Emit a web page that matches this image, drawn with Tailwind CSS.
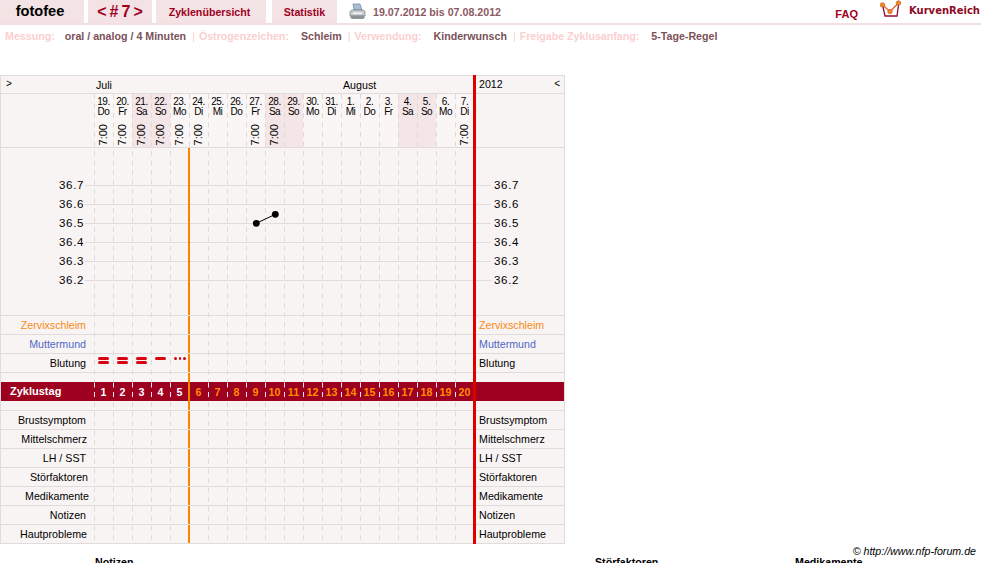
<!DOCTYPE html>
<html lang="de">
<head>
<meta charset="utf-8">
<title>Zyklusblatt</title>
<script src="https://cdn.jsdelivr.net/npm/@tailwindcss/browser@4"></script>
</head>
<body class="bg-white h-[563px] overflow-hidden font-['Liberation_Sans',Arial,sans-serif] text-[10.67px] text-black">
<div class="relative h-[563px] overflow-hidden">

<!-- top navigation -->
<header class="flex h-[25px] border-b-2 border-[#f3dfe1] items-stretch">
  <div class="w-[84px] bg-[#f3e3e5] flex items-center justify-center font-bold text-[14.600px] pr-[4px]">fotofee</div>
  <div class="w-[64px] ml-1 bg-[#f3e3e5] flex items-center justify-center gap-[3px] font-bold text-[16px] text-[#a0001e]"><span>&lt;</span><span>#</span><span>7</span><span>&gt;</span></div>
  <div class="w-[110px] ml-1 bg-[#f3e3e5] flex items-center justify-center font-bold text-[#a0001e] pr-[3px]">Zyklenübersicht</div>
  <div class="w-[65px] ml-1.5 bg-[#f3e3e5] flex items-center justify-center font-bold text-[#a0001e]">Statistik</div>
  <svg class="ml-3 mt-[3px]" width="17" height="17" viewBox="0 0 17 17">
    <path d="M4 1h7l2 6H5z" fill="#a9bfd6" stroke="#6f8296" stroke-width=".7"/>
    <path d="M1 8.500 3 7h11l2 1.500V13H1z" fill="#c9ccce" stroke="#777" stroke-width=".7"/>
    <path d="M1.500 12.500h14V15l-1.500 1H3l-1.500-1z" fill="#8e9294"/>
    <path d="M4 9.500h9v1.500H4z" fill="#f2f2f2"/>
  </svg>
  <div class="ml-[7px] flex items-center font-bold text-[#8a5a64]">19.07.2012 bis 07.08.2012</div>
  <div class="ml-auto flex items-end font-bold text-[#a0001e] text-[11px] pb-[1px]">FAQ</div>
  <svg class="ml-[22px]" width="22" height="21" viewBox="0 0 22 21">
    <path d="M3 7 5 16h12l1.500-11" fill="#fff" stroke="#8e1030" stroke-width="1.300"/>
    <path d="M2.500 5 10 11.500 18.500 3" fill="none" stroke="#e25a20" stroke-width="1.200"/>
    <circle cx="2.500" cy="5" r="2.300" fill="#f08a1c" stroke="#b8402a" stroke-width=".5"/>
    <circle cx="10" cy="11.500" r="2.300" fill="#f08a1c" stroke="#b8402a" stroke-width=".5"/>
    <circle cx="18.500" cy="3" r="2.300" fill="#f08a1c" stroke="#b8402a" stroke-width=".5"/>
  </svg>
  <div class="ml-[7px] mr-px font-['DejaVu_Sans',sans-serif] font-bold text-[10px] text-[#8e0a24] pt-[3px]">KurvenReich</div>
</header>

<!-- cycle settings -->
<div class="flex mt-[4px] pl-[5px] h-[14px] items-center font-bold whitespace-pre text-[#7c5058]">
  <span class="text-[#fbcfd0]">Messung:</span><span class="ml-[10px]">oral / analog / 4 Minuten</span><span class="ml-[6px] font-normal text-[#fbcfd0]">|</span>
  <span class="ml-[4px] text-[#fbcfd0]">Östrogenzeichen:</span><span class="ml-[12px]">Schleim</span><span class="ml-[6px] font-normal text-[#fbcfd0]">|</span>
  <span class="ml-[4px] text-[#fbcfd0]">Verwendung:</span><span class="ml-[12px]">Kinderwunsch</span><span class="ml-[6px] font-normal text-[#fbcfd0]">|</span>
  <span class="ml-[4px] text-[#fbcfd0]">Freigabe Zyklusanfang:</span><span class="ml-[12px]">5-Tage-Regel</span>
</div>

<!-- chart table -->
<main class="relative mt-[32px] w-[565px] h-[469px] bg-[#f9f4f4] border border-[#e0dcdc] border-b-0">
  <div class="flex h-[18px] border-b border-[#e0dcdc] items-center">
    <div class="w-[94px] -ml-px pl-[6px] pb-[3px] text-[10px]">&gt;</div>
    <div class="w-[247px] pl-[2px]">Juli</div>
    <div class="w-[136px] pl-[2px]">August</div>
    <div class="flex-1 flex justify-between pl-[2px] pr-[4px]"><span>2012</span><span class="text-[10px] pb-[3px]">&lt;</span></div>
  </div>

  <div class="flex h-[54px] border-b border-[#e0dcdc]">
    <div class="w-[93px]"></div>
    <div class="flex text-[10px] leading-[10px] text-center tracking-[-0.5px]">
      <div class="w-[19px] pt-[3px] bg-[#faf6f6] flex flex-col items-center"><span>19.</span><span>Do</span><span class="mt-[7px] [writing-mode:vertical-rl] rotate-180 text-[11px] leading-[11px] tracking-normal">7:00</span></div>
      <div class="w-[19px] pt-[3px] bg-[#faf6f6] flex flex-col items-center"><span>20.</span><span>Fr</span><span class="mt-[7px] [writing-mode:vertical-rl] rotate-180 text-[11px] leading-[11px] tracking-normal">7:00</span></div>
      <div class="w-[19px] pt-[3px] bg-[#f4e5e7] flex flex-col items-center"><span>21.</span><span>Sa</span><span class="mt-[7px] [writing-mode:vertical-rl] rotate-180 text-[11px] leading-[11px] tracking-normal">7:00</span></div>
      <div class="w-[19px] pt-[3px] bg-[#f4e5e7] flex flex-col items-center"><span>22.</span><span>So</span><span class="mt-[7px] [writing-mode:vertical-rl] rotate-180 text-[11px] leading-[11px] tracking-normal">7:00</span></div>
      <div class="w-[19px] pt-[3px] bg-[#faf6f6] flex flex-col items-center"><span>23.</span><span>Mo</span><span class="mt-[7px] [writing-mode:vertical-rl] rotate-180 text-[11px] leading-[11px] tracking-normal">7:00</span></div>
      <div class="w-[19px] pt-[3px] bg-[#faf6f6] flex flex-col items-center"><span>24.</span><span>Di</span><span class="mt-[7px] [writing-mode:vertical-rl] rotate-180 text-[11px] leading-[11px] tracking-normal">7:00</span></div>
      <div class="w-[19px] pt-[3px] bg-[#faf6f6] flex flex-col items-center"><span>25.</span><span>Mi</span></div>
      <div class="w-[19px] pt-[3px] bg-[#faf6f6] flex flex-col items-center"><span>26.</span><span>Do</span></div>
      <div class="w-[19px] pt-[3px] bg-[#faf6f6] flex flex-col items-center"><span>27.</span><span>Fr</span><span class="mt-[7px] [writing-mode:vertical-rl] rotate-180 text-[11px] leading-[11px] tracking-normal">7:00</span></div>
      <div class="w-[19px] pt-[3px] bg-[#f4e5e7] flex flex-col items-center"><span>28.</span><span>Sa</span><span class="mt-[7px] [writing-mode:vertical-rl] rotate-180 text-[11px] leading-[11px] tracking-normal">7:00</span></div>
      <div class="w-[19px] pt-[3px] bg-[#f4e5e7] flex flex-col items-center"><span>29.</span><span>So</span></div>
      <div class="w-[19px] pt-[3px] bg-[#faf6f6] flex flex-col items-center"><span>30.</span><span>Mo</span></div>
      <div class="w-[19px] pt-[3px] bg-[#faf6f6] flex flex-col items-center"><span>31.</span><span>Di</span></div>
      <div class="w-[19px] pt-[3px] bg-[#faf6f6] flex flex-col items-center"><span>1.</span><span>Mi</span></div>
      <div class="w-[19px] pt-[3px] bg-[#faf6f6] flex flex-col items-center"><span>2.</span><span>Do</span></div>
      <div class="w-[19px] pt-[3px] bg-[#faf6f6] flex flex-col items-center"><span>3.</span><span>Fr</span></div>
      <div class="w-[19px] pt-[3px] bg-[#f4e5e7] flex flex-col items-center"><span>4.</span><span>Sa</span></div>
      <div class="w-[19px] pt-[3px] bg-[#f4e5e7] flex flex-col items-center"><span>5.</span><span>So</span></div>
      <div class="w-[19px] pt-[3px] bg-[#faf6f6] flex flex-col items-center"><span>6.</span><span>Mo</span></div>
      <div class="w-[19px] pt-[3px] bg-[#faf6f6] flex flex-col items-center"><span>7.</span><span>Di</span><span class="mt-[7px] [writing-mode:vertical-rl] rotate-180 text-[11px] leading-[11px] tracking-normal">7:00</span></div>
    </div>
  </div>

  <!-- temperature scale -->
  <div class="h-[168px] border-b border-[#e0dcdc] pt-[28px] tracking-[0.7px] text-[11.500px]">
    <div class="flex h-[19px] items-center pl-[58px]"><span class="w-[26px]">36.7</span><span class="w-[406px] h-px bg-[#e0dcdc]"></span><span class="ml-[3px]">36.7</span></div>
    <div class="flex h-[19px] items-center pl-[58px]"><span class="w-[26px]">36.6</span><span class="w-[406px] h-px bg-[#e0dcdc]"></span><span class="ml-[3px]">36.6</span></div>
    <div class="flex h-[19px] items-center pl-[58px]"><span class="w-[26px]">36.5</span><span class="w-[406px] h-px bg-[#e0dcdc]"></span><span class="ml-[3px]">36.5</span></div>
    <div class="flex h-[19px] items-center pl-[58px]"><span class="w-[26px]">36.4</span><span class="w-[406px] h-px bg-[#e0dcdc]"></span><span class="ml-[3px]">36.4</span></div>
    <div class="flex h-[19px] items-center pl-[58px]"><span class="w-[26px]">36.3</span><span class="w-[406px] h-px bg-[#e0dcdc]"></span><span class="ml-[3px]">36.3</span></div>
    <div class="flex h-[19px] items-center pl-[58px]"><span class="w-[26px]">36.2</span><span class="w-[406px] h-px bg-[#e0dcdc]"></span><span class="ml-[3px]">36.2</span></div>
  </div>

  <div class="flex h-[19px] border-b border-[#e0dcdc] items-center justify-between text-[#f78a12]"><span class="w-[85px] text-right">Zervixschleim</span><span class="w-[86px] pl-[1px]">Zervixschleim</span></div>
  <div class="flex h-[19px] border-b border-[#e0dcdc] items-center justify-between text-[#4f68c8]"><span class="w-[85px] text-right">Muttermund</span><span class="w-[86px] pl-[1px]">Muttermund</span></div>
  <div class="flex h-[19px] border-b border-[#e0dcdc] items-center">
    <span class="w-[85px] text-right">Blutung</span>
    <div class="flex w-[95px] ml-[8px] pb-[5px] h-full items-center">
      <div class="w-[19px] pl-[4px] flex flex-col gap-[1px]"><i class="block w-[11px] h-[3px] bg-[#d9000f] rounded-full"></i><i class="block w-[11px] h-[3px] bg-[#d9000f] rounded-full"></i></div>
      <div class="w-[19px] pl-[4px] flex flex-col gap-[1px]"><i class="block w-[11px] h-[3px] bg-[#d9000f] rounded-full"></i><i class="block w-[11px] h-[3px] bg-[#d9000f] rounded-full"></i></div>
      <div class="w-[19px] pl-[4px] flex flex-col gap-[1px]"><i class="block w-[11px] h-[3px] bg-[#d9000f] rounded-full"></i><i class="block w-[11px] h-[3px] bg-[#d9000f] rounded-full"></i></div>
      <div class="w-[19px] pl-[4px] pb-[4px]"><i class="block w-[11px] h-[3px] bg-[#d9000f] rounded-full"></i></div>
      <div class="w-[19px] pl-[4px] pb-[4.500px] flex gap-[2px]"><i class="block size-[2.500px] bg-[#d9000f] rounded-full"></i><i class="block size-[2.500px] bg-[#d9000f] rounded-full"></i><i class="block size-[2.500px] bg-[#d9000f] rounded-full"></i></div>
    </div>
    <span class="ml-auto w-[86px] pl-[1px]">Blutung</span>
  </div>

  <div class="h-[9px]"></div>
  <div class="flex h-[19px] bg-[#9e0020] items-center font-bold">
    <span class="w-[93px] pl-[9px] text-white text-[11px]">Zyklustag</span>
    <div class="flex text-center text-white">
      <span class="w-[19px]">1</span><span class="w-[19px]">2</span><span class="w-[19px]">3</span><span class="w-[19px]">4</span><span class="w-[19px]">5</span>
    </div>
    <div class="flex text-center text-[#ff8c00]">
      <span class="w-[19px]">6</span><span class="w-[19px]">7</span><span class="w-[19px]">8</span><span class="w-[19px]">9</span><span class="w-[19px]">10</span><span class="w-[19px]">11</span><span class="w-[19px]">12</span><span class="w-[19px]">13</span><span class="w-[19px]">14</span><span class="w-[19px]">15</span><span class="w-[19px]">16</span><span class="w-[19px]">17</span><span class="w-[19px]">18</span><span class="w-[19px]">19</span><span class="w-[19px]">20</span>
    </div>
  </div>
  <div class="h-[10px] border-b border-[#e0dcdc]"></div>

  <div class="flex h-[19px] border-b border-[#e0dcdc] items-center justify-between"><span class="w-[85px] text-right">Brustsymptom</span><span class="w-[86px] pl-[1px]">Brustsymptom</span></div>
  <div class="flex h-[19px] border-b border-[#e0dcdc] items-center justify-between"><span class="w-[86px] text-right">Mittelschmerz</span><span class="w-[86px] pl-[1px]">Mittelschmerz</span></div>
  <div class="flex h-[19px] border-b border-[#e0dcdc] items-center justify-between"><span class="w-[85px] text-right">LH / SST</span><span class="w-[86px] pl-[1px]">LH / SST</span></div>
  <div class="flex h-[19px] border-b border-[#e0dcdc] items-center justify-between"><span class="w-[87px] text-right">Störfaktoren</span><span class="w-[86px] pl-[1px]">Störfaktoren</span></div>
  <div class="flex h-[19px] border-b border-[#e0dcdc] items-center justify-between"><span class="w-[88px] text-right">Medikamente</span><span class="w-[86px] pl-[1px]">Medikamente</span></div>
  <div class="flex h-[19px] border-b border-[#e0dcdc] items-center justify-between"><span class="w-[85px] text-right">Notizen</span><span class="w-[86px] pl-[1px]">Notizen</span></div>
  <div class="flex h-[19px] border-b border-[#e0dcdc] items-center justify-between"><span class="w-[86px] text-right">Hautprobleme</span><span class="w-[86px] pl-[1px]">Hautprobleme</span></div>

  <!-- day grid, cycle markers and measured values drawn over the rows -->
  <svg class="absolute -left-px -top-px pointer-events-none" width="565" height="469" viewBox="0 75 565 469">
    <g fill="none" stroke="#dedada" stroke-width="1" stroke-dasharray="5 4.500">
      <path d="M94.500 94V382M113.500 94V382M132.500 94V382M151.500 94V382M170.500 94V382M189.500 94V382M208.500 94V382M227.500 94V382M246.500 94V382M265.500 94V382M284.500 94V382M303.500 94V382M322.500 94V382M341.500 94V382M360.500 94V382M379.500 94V382M398.500 94V382M417.500 94V382M436.500 94V382M455.500 94V382"/>
      <path d="M94.500 402V543M113.500 402V543M132.500 402V543M151.500 402V543M170.500 402V543M208.500 402V543M227.500 402V543M246.500 402V543M265.500 402V543M284.500 402V543M303.500 402V543M322.500 402V543M341.500 402V543M360.500 402V543M379.500 402V543M398.500 402V543M417.500 402V543M436.500 402V543M455.500 402V543"/>
    </g>
    <path d="M94.500 382.500V401M113.500 382.500V401M132.500 382.500V401M151.500 382.500V401M170.500 382.500V401M208.500 382.500V401M227.500 382.500V401M246.500 382.500V401M265.500 382.500V401M284.500 382.500V401M303.500 382.500V401M322.500 382.500V401M341.500 382.500V401M360.500 382.500V401M379.500 382.500V401M398.500 382.500V401M417.500 382.500V401M436.500 382.500V401M455.500 382.500V401" fill="none" stroke="#f6e8ea" stroke-dasharray="5 4.500"/>
    <path d="M189 148V315M189 316V334M189 335V353M189 354V372M189 373V410M189 411V429M189 430V448M189 449V467M189 468V486M189 487V505M189 506V524M189 525V543" fill="none" stroke="#f98500" stroke-width="2"/>
    <path d="M474.500 75V544" fill="none" stroke="#dc0000" stroke-width="3"/>
    <path d="M256.300 223.300 275.300 214.300" stroke="#000" stroke-width="1"/>
    <circle cx="256.300" cy="223.300" r="3.400" fill="#000"/>
    <circle cx="275.300" cy="214.300" r="3.400" fill="#000"/>
  </svg>
</main>

<!-- table below the chart, cut off by the window -->
<p class="absolute right-[5px] top-[545px] italic leading-[13px]">© http://www.nfp-forum.de</p>
<div class="flex mt-[12px] pl-[95px] font-bold leading-[13px]">
  <span class="w-[500px]">Notizen</span>
  <span class="w-[200px]">Störfaktoren</span>
  <span>Medikamente</span>
</div>
</div>
</body>
</html>
